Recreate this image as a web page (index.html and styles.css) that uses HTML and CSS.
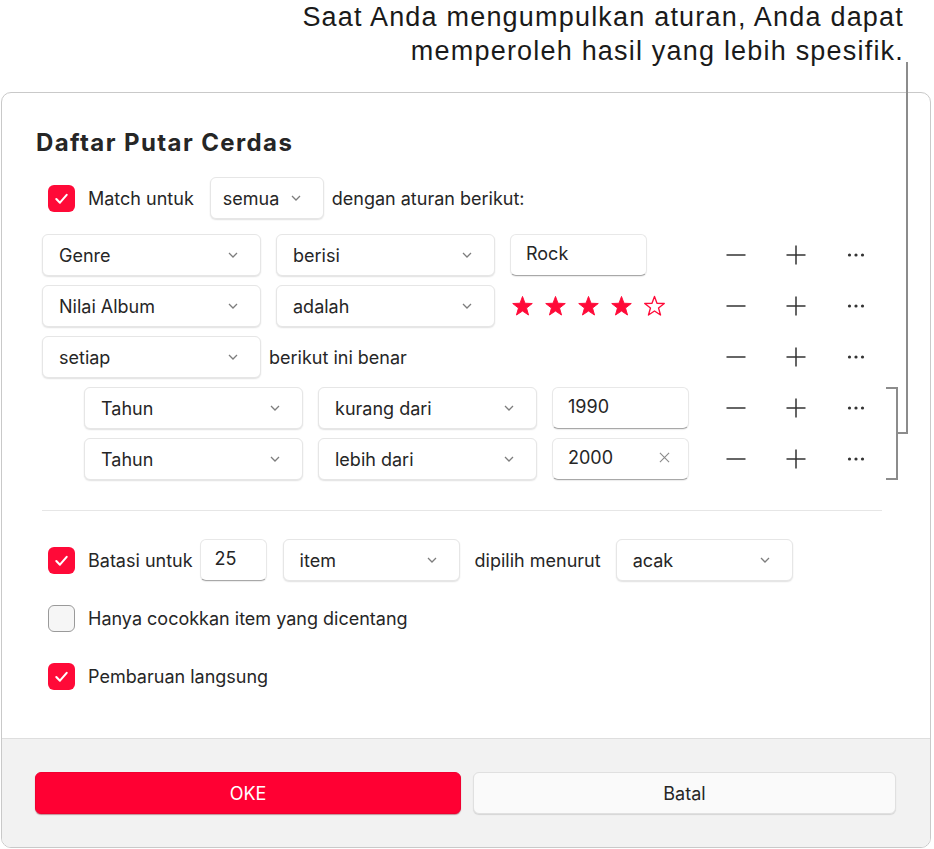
FILE: index.html
```html
<!DOCTYPE html>
<html lang="id">
<head>
<meta charset="utf-8">
<title>Daftar Putar Cerdas</title>
<link rel="stylesheet" href="styles.css">
</head>
<body>
<div class="page">
  <div class="callout">Saat Anda mengumpulkan aturan, Anda dapat<br>memperoleh hasil yang lebih spesifik.</div>

  <svg class="callout-lines" width="934" height="849" viewBox="0 0 934 849" aria-hidden="true">
    <path d="M907 62 V433 H897" fill="none" stroke="#8c8c8c" stroke-width="2"/>
    <path d="M886 388 H897 V479 H886" fill="none" stroke="#8c8c8c" stroke-width="2"/>
  </svg>

  <div class="dialog">
    <h1 class="title">Daftar Putar Cerdas</h1>

    <div class="line match-row">
      <span class="check on"><svg viewBox="0 0 26 26"><path d="M8 13.5 L11.5 17 L18 9.5"/></svg></span>
      <span class="label">Match untuk</span>
      <div class="dd dd-semua gap-l16"><span>semua</span><svg class="chev" viewBox="0 0 10 6"><path d="M1 1 L5 5 L9 1"/></svg></div>
      <span class="label gap-l8">dengan aturan berikut:</span>
    </div>

    <div class="rules">
      <div class="rule">
        <div class="rule-main">
          <div class="dd dd-wide"><span>Genre</span><svg class="chev" viewBox="0 0 10 6"><path d="M1 1 L5 5 L9 1"/></svg></div>
          <div class="dd dd-wide"><span>berisi</span><svg class="chev" viewBox="0 0 10 6"><path d="M1 1 L5 5 L9 1"/></svg></div>
          <div class="field"><span>Rock</span></div>
        </div>
        <div class="actions">
          <span class="act"><svg viewBox="0 0 20 20"><path d="M0.5 10 H19.5"/></svg></span>
          <span class="act"><svg viewBox="0 0 20 20"><path d="M0.5 10 H19.5 M10 0.5 V19.5"/></svg></span>
          <span class="act"><svg viewBox="0 0 20 20"><circle cx="3.5" cy="10" r="1.6"/><circle cx="10" cy="10" r="1.6"/><circle cx="16.5" cy="10" r="1.6"/></svg></span>
        </div>
      </div>

      <div class="rule">
        <div class="rule-main">
          <div class="dd dd-wide"><span>Nilai Album</span><svg class="chev" viewBox="0 0 10 6"><path d="M1 1 L5 5 L9 1"/></svg></div>
          <div class="dd dd-wide"><span>adalah</span><svg class="chev" viewBox="0 0 10 6"><path d="M1 1 L5 5 L9 1"/></svg></div>
          <div class="stars">
            <svg class="star" viewBox="0 0 24 24"><path d="M12 1.5 L14.6 8.6 L22.2 8.9 L16.2 13.6 L18.3 20.9 L12 16.7 L5.7 20.9 L7.8 13.6 L1.8 8.9 L9.4 8.6 Z"/></svg>
            <svg class="star" viewBox="0 0 24 24"><path d="M12 1.5 L14.6 8.6 L22.2 8.9 L16.2 13.6 L18.3 20.9 L12 16.7 L5.7 20.9 L7.8 13.6 L1.8 8.9 L9.4 8.6 Z"/></svg>
            <svg class="star" viewBox="0 0 24 24"><path d="M12 1.5 L14.6 8.6 L22.2 8.9 L16.2 13.6 L18.3 20.9 L12 16.7 L5.7 20.9 L7.8 13.6 L1.8 8.9 L9.4 8.6 Z"/></svg>
            <svg class="star" viewBox="0 0 24 24"><path d="M12 1.5 L14.6 8.6 L22.2 8.9 L16.2 13.6 L18.3 20.9 L12 16.7 L5.7 20.9 L7.8 13.6 L1.8 8.9 L9.4 8.6 Z"/></svg>
            <svg class="star empty" viewBox="0 0 24 24"><path d="M12 1.5 L14.6 8.6 L22.2 8.9 L16.2 13.6 L18.3 20.9 L12 16.7 L5.7 20.9 L7.8 13.6 L1.8 8.9 L9.4 8.6 Z"/></svg>
          </div>
        </div>
        <div class="actions">
          <span class="act"><svg viewBox="0 0 20 20"><path d="M0.5 10 H19.5"/></svg></span>
          <span class="act"><svg viewBox="0 0 20 20"><path d="M0.5 10 H19.5 M10 0.5 V19.5"/></svg></span>
          <span class="act"><svg viewBox="0 0 20 20"><circle cx="3.5" cy="10" r="1.6"/><circle cx="10" cy="10" r="1.6"/><circle cx="16.5" cy="10" r="1.6"/></svg></span>
        </div>
      </div>

      <div class="rule">
        <div class="rule-main">
          <div class="dd dd-wide"><span>setiap</span><svg class="chev" viewBox="0 0 10 6"><path d="M1 1 L5 5 L9 1"/></svg></div>
          <span class="label label-tight">berikut ini benar</span>
        </div>
        <div class="actions">
          <span class="act"><svg viewBox="0 0 20 20"><path d="M0.5 10 H19.5"/></svg></span>
          <span class="act"><svg viewBox="0 0 20 20"><path d="M0.5 10 H19.5 M10 0.5 V19.5"/></svg></span>
          <span class="act"><svg viewBox="0 0 20 20"><circle cx="3.5" cy="10" r="1.6"/><circle cx="10" cy="10" r="1.6"/><circle cx="16.5" cy="10" r="1.6"/></svg></span>
        </div>
      </div>

      <div class="rule nested">
        <div class="rule-main">
          <div class="dd dd-wide"><span>Tahun</span><svg class="chev" viewBox="0 0 10 6"><path d="M1 1 L5 5 L9 1"/></svg></div>
          <div class="dd dd-wide"><span>kurang dari</span><svg class="chev" viewBox="0 0 10 6"><path d="M1 1 L5 5 L9 1"/></svg></div>
          <div class="field"><span>1990</span></div>
        </div>
        <div class="actions">
          <span class="act"><svg viewBox="0 0 20 20"><path d="M0.5 10 H19.5"/></svg></span>
          <span class="act"><svg viewBox="0 0 20 20"><path d="M0.5 10 H19.5 M10 0.5 V19.5"/></svg></span>
          <span class="act"><svg viewBox="0 0 20 20"><circle cx="3.5" cy="10" r="1.6"/><circle cx="10" cy="10" r="1.6"/><circle cx="16.5" cy="10" r="1.6"/></svg></span>
        </div>
      </div>

      <div class="rule nested">
        <div class="rule-main">
          <div class="dd dd-wide"><span>Tahun</span><svg class="chev" viewBox="0 0 10 6"><path d="M1 1 L5 5 L9 1"/></svg></div>
          <div class="dd dd-wide"><span>lebih dari</span><svg class="chev" viewBox="0 0 10 6"><path d="M1 1 L5 5 L9 1"/></svg></div>
          <div class="field"><span>2000</span><svg class="clear" viewBox="0 0 12 12"><path d="M1 1 L11 11 M11 1 L1 11"/></svg></div>
        </div>
        <div class="actions">
          <span class="act"><svg viewBox="0 0 20 20"><path d="M0.5 10 H19.5"/></svg></span>
          <span class="act"><svg viewBox="0 0 20 20"><path d="M0.5 10 H19.5 M10 0.5 V19.5"/></svg></span>
          <span class="act"><svg viewBox="0 0 20 20"><circle cx="3.5" cy="10" r="1.6"/><circle cx="10" cy="10" r="1.6"/><circle cx="16.5" cy="10" r="1.6"/></svg></span>
        </div>
      </div>
    </div>

    <div class="sep"></div>

    <div class="options">
      <div class="line">
        <span class="check on"><svg viewBox="0 0 26 26"><path d="M8 13.5 L11.5 17 L18 9.5"/></svg></span>
        <span class="label">Batasi untuk</span>
        <div class="field field-num gap-l7"><span>25</span></div>
        <div class="dd dd-item gap-l16"><span>item</span><svg class="chev" viewBox="0 0 10 6"><path d="M1 1 L5 5 L9 1"/></svg></div>
        <span class="label gap-l15">dipilih menurut</span>
        <div class="dd dd-item gap-l15"><span>acak</span><svg class="chev" viewBox="0 0 10 6"><path d="M1 1 L5 5 L9 1"/></svg></div>
      </div>
      <div class="line">
        <span class="check off"></span>
        <span class="label">Hanya cocokkan item yang dicentang</span>
      </div>
      <div class="line">
        <span class="check on"><svg viewBox="0 0 26 26"><path d="M8 13.5 L11.5 17 L18 9.5"/></svg></span>
        <span class="label">Pembaruan langsung</span>
      </div>
    </div>

    <div class="footer">
      <button class="btn btn-primary">OKE</button>
      <button class="btn btn-secondary">Batal</button>
    </div>
  </div>
</div>
</body>
</html>
```

FILE: styles.css
```css
* { box-sizing: border-box; }

html, body {
  margin: 0;
  padding: 0;
  background: #ffffff;
}

.page {
  position: relative;
  width: 934px;
  height: 849px;
  overflow: hidden;
  font-family: Inter, "Noto Sans", sans-serif;
  color: #262626;
}

.callout {
  height: 92px;
  padding-right: 30px;
  text-align: right;
  font-family: "Liberation Sans", Arial, sans-serif;
  font-size: 27px;
  line-height: 34px;
  letter-spacing: 1.2px;
  color: #1a1a1a;
}

.callout-lines {
  position: absolute;
  left: 0;
  top: 0;
  z-index: 2;
  pointer-events: none;
}

.dialog {
  margin-left: 1px;
  width: 930px;
  border: 1px solid #c9c9c9;
  border-radius: 10px;
  overflow: hidden;
  background: #fff;
}

.title {
  margin: 35px 0 0 34px;
  font-size: 24px;
  line-height: 30px;
  font-weight: 700;
  letter-spacing: 1.4px;
  color: #262626;
}

.line {
  display: flex;
  align-items: center;
  height: 42px;
}

.match-row {
  margin: 19px 0 0 46px;
}

.gap-l7 { margin-left: 7px; }
.gap-l8 { margin-left: 8px; }
.gap-l15 { margin-left: 15px; }
.gap-l16 { margin-left: 16px; }

.check {
  flex: none;
  width: 27px;
  height: 27px;
  border-radius: 6px;
  display: flex;
  align-items: center;
  justify-content: center;
  margin-right: 13px;
}

.check.on {
  background: #ff0a38;
}

.check.on svg {
  width: 27px;
  height: 27px;
  fill: none;
  stroke: #fff;
  stroke-width: 2;
  stroke-linecap: round;
  stroke-linejoin: round;
}

.check.off {
  background: #f6f6f6;
  border: 1.5px solid #9a9a9a;
}

.label {
  font-size: 18px;
  white-space: nowrap;
  color: #262626;
}

.dd {
  flex: none;
  height: 42px;
  display: flex;
  align-items: center;
  justify-content: space-between;
  padding: 0 22px 0 16px;
  background: #fff;
  border: 1px solid #e6e6e6;
  border-radius: 6px;
  box-shadow: 0 1px 1.5px rgba(0, 0, 0, 0.12);
  font-size: 18px;
  color: #262626;
}

.dd-semua {
  width: 114px;
  padding-left: 12px;
}

.dd-wide { width: 219px; }
.dd-item { width: 177px; }

.chev {
  width: 10px;
  height: 6px;
  fill: none;
  stroke: #7d7d7d;
  stroke-width: 1.3;
}

.rules {
  margin: 15px 0 0 40px;
  display: flex;
  flex-direction: column;
  gap: 9px;
}

.rule {
  display: flex;
  align-items: center;
  height: 42px;
}

.rule.nested .rule-main { padding-left: 42px; }

.rule-main {
  flex: 1;
  display: flex;
  align-items: center;
  gap: 15px;
}

.label-tight { margin-left: -7px; }

.field {
  flex: none;
  width: 137px;
  height: 42px;
  display: flex;
  align-items: center;
  justify-content: space-between;
  padding: 0 18px 3px 15px;
  background: #fff;
  border: 1px solid #e8e8e8;
  border-bottom: 1px solid #a8a8a8;
  border-radius: 6px;
  box-shadow: 0 1px 1px rgba(0, 0, 0, 0.08);
  font-size: 18px;
  color: #262626;
}

.field-num {
  width: 67px;
  padding-left: 14px;
}

.clear {
  width: 11px;
  height: 11px;
  fill: none;
  stroke: #8a8a8a;
  stroke-width: 1.2;
}

.stars {
  display: flex;
  align-items: center;
  gap: 10px;
  margin-left: 1px;
}

.star {
  width: 23px;
  height: 23px;
  fill: #ff0a38;
  stroke: #ff0a38;
  stroke-width: 1;
  stroke-linejoin: round;
}

.star.empty {
  fill: none;
  stroke-width: 1.4;
}

.actions {
  flex: none;
  display: flex;
  gap: 20px;
  margin-right: 54px;
}

.act {
  width: 40px;
  height: 20px;
  display: flex;
  align-items: center;
  justify-content: center;
}

.act svg {
  width: 20px;
  height: 20px;
  fill: #333;
  stroke: #333;
  stroke-width: 1.5;
}

.act svg circle { stroke: none; }

.sep {
  margin: 30px 48px 0 40px;
  height: 1px;
  background: #e6e6e6;
}

.options {
  margin: 28px 0 0 46px;
  display: flex;
  flex-direction: column;
  gap: 16px;
}

.footer {
  margin-top: 41px;
  height: 109px;
  background: #f2f2f2;
  border-top: 1px solid #dedede;
  display: flex;
  align-items: flex-start;
  gap: 12px;
  padding: 33px 34px 0 33px;
}

.btn {
  height: 42px;
  border-radius: 6px;
  font-family: Inter, "Noto Sans", sans-serif;
  font-size: 18px;
  cursor: pointer;
}

.btn-primary {
  width: 426px;
  background: #ff0033;
  color: #fff;
  border: 1px solid #f00030;
  box-shadow: 0 1px 1px rgba(120, 0, 20, 0.4);
}

.btn-secondary {
  flex: 1;
  background: #fafafa;
  color: #262626;
  border: 1px solid #e0e0e0;
  box-shadow: 0 1px 1px rgba(0, 0, 0, 0.12);
}
```
